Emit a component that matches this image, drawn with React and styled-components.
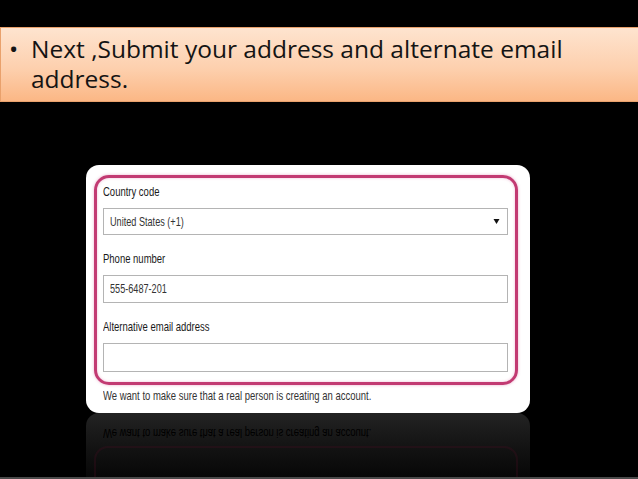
import React from "react";
import styled, { createGlobalStyle } from "styled-components";

const GlobalStyle = createGlobalStyle`
  html, body {
    margin: 0;
    padding: 0;
    background: #000;
  }
`;

const Slide = styled.div`
  width: 638px;
  height: 479px;
  background: #000;
  overflow: hidden;
  display: flex;
  flex-direction: column;
`;

const Banner = styled.div`
  margin-top: 27px;
  height: 73px;
  border: 1px solid #e9a16c;
  border-right: none;
  background: linear-gradient(180deg, #fee4cf 0%, #fdd0ae 55%, #fbb785 100%);
  padding: 6px 0 0 8px;
  display: flex;
  font-family: "Open Sans", Lato, sans-serif;
  font-size: 24.5px;
  line-height: 30px;
  color: #141414;
`;

const Bullet = styled.span`
  width: 22px;
  flex: none;
`;

const Stage = styled.div`
  margin: 63px 0 0 86px;
  width: 444px;
  display: flex;
  flex-direction: column;
`;

const Card = styled.div`
  height: 248px;
  box-sizing: border-box;
  background: #fff;
  border-radius: 13px;
  padding: 10px 0 0 8px;
`;

const Frame = styled.div`
  width: 424px;
  height: 210px;
  box-sizing: border-box;
  border: 3px solid #c23a72;
  border-radius: 15px;
  box-shadow: 0 0 3px rgba(214, 90, 150, 0.5), inset 0 0 3px rgba(214, 90, 150, 0.4);
  padding: 6px 7px 0 6px;
  display: flex;
  flex-direction: column;
  gap: 16px;
`;

const Field = styled.div`
  display: flex;
  flex-direction: column;
  gap: 8px;
`;

/* narrow UI text, squeezed like the Segoe UI in the screenshot */
const Narrow = styled.span`
  display: inline-block;
  white-space: nowrap;
  font-family: "Liberation Sans", Arial, sans-serif;
  font-size: ${(p) => p.$size || 13}px;
  line-height: 16px;
  color: ${(p) => p.$color || "#1a1a1a"};
  transform: scaleX(0.73);
  transform-origin: left center;
`;

const Box = styled.div`
  height: ${(p) => p.$h}px;
  box-sizing: border-box;
  border: 1px solid #b4b4b4;
  background: #fff;
  display: flex;
  align-items: center;
  justify-content: space-between;
  padding: 0 7px 0 6px;
`;

const Note = styled.div`
  margin: 1px 0 0 9px;
  height: 16px;
`;

const Reflection = styled.div`
  height: 64px;
  border-radius: 13px 13px 0 0;
  background: linear-gradient(180deg, #232323 0%, #141414 50%, #070707 100%);
  padding: 14px 0 0 17px;
  box-sizing: border-box;
`;

const Mirrored = styled.div`
  transform: scaleY(-1);
  height: 16px;
`;

const MirrorFrame = styled.div`
  margin: 3px 0 0 -9px;
  width: 420px;
  height: 30px;
  border: 2px solid rgba(70, 15, 35, 0.3);
  border-bottom: none;
  border-radius: 14px 14px 0 0;
`;

const BottomRule = styled.div`
  margin-top: auto;
  height: 2px;
  background: #4a4a4a;
`;

const Caret = () => (
  <svg width="7" height="7" viewBox="0 0 7 7">
    <path d="M0.5 1 L6.5 1 L3.5 6 Z" fill="#111" />
  </svg>
);

const NOTE = "We want to make sure that a real person is creating an account.";

export default function App() {
  return (
    <>
      <GlobalStyle />
      <Slide>
        <Banner>
          <Bullet>•</Bullet>
          <div>
            Next ,Submit your address and alternate email
            <br />
            address.
          </div>
        </Banner>
        <Stage>
          <Card>
            <Frame>
              <Field>
                <Narrow>Country code</Narrow>
                <Box $h={27}>
                  <Narrow $size={12.5} $color="#333">United States (+1)</Narrow>
                  <Caret />
                </Box>
              </Field>
              <Field>
                <Narrow>Phone number</Narrow>
                <Box $h={28}>
                  <Narrow $size={12.5} $color="#333">555-6487-201</Narrow>
                </Box>
              </Field>
              <Field>
                <Narrow>Alternative email address</Narrow>
                <Box $h={29} />
              </Field>
            </Frame>
            <Note>
              <Narrow $color="#333">{NOTE}</Narrow>
            </Note>
          </Card>
          <Reflection>
            <Mirrored>
              <Narrow $color="#000">{NOTE}</Narrow>
            </Mirrored>
            <MirrorFrame />
          </Reflection>
        </Stage>
        <BottomRule />
      </Slide>
    </>
  );
}
